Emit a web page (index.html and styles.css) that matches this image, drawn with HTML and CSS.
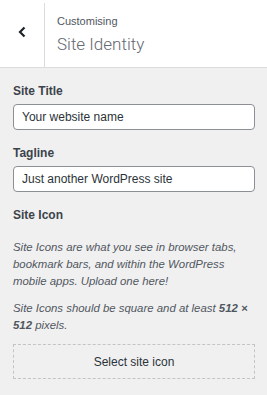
FILE: index.html
```html
<!DOCTYPE html>
<html lang="en">

<head>
    <meta charset="UTF-8">
    <title>Site Identity</title>
    <link rel="stylesheet" href="styles.css">
</head>

<body>
    <div class="panel-header">
        <div class="back">
            <svg width="10" height="12" viewBox="0 0 10 12"><path d="M7.5 1.5 L3 6 L7.5 10.5" fill="none" stroke="#1d2327" stroke-width="2.2"/></svg>
        </div>
        <div class="panel-title">
            <span class="small">Customising</span>
            <span class="big">Site Identity</span>
        </div>
    </div>

    <div class="controls">
        <label class="field-label">Site Title</label>
        <input type="text" value="Your website name">

        <label class="field-label">Tagline</label>
        <input type="text" value="Just another WordPress site">

        <label class="field-label icon-label">Site Icon</label>
        <p class="desc">Site Icons are what you see in browser tabs, bookmark bars, and within the WordPress mobile apps. Upload one here!</p>
        <p class="desc">Site Icons should be square and at least <strong>512 &times;</strong> <strong>512</strong> pixels.</p>

        <button class="select-icon">Select site icon</button>
    </div>
</body>

</html>
```

FILE: styles.css
```css
body {
    margin: 0;
    background: #f0f0f1;
    font-family: "Liberation Sans", Arial, sans-serif;
    color: #50575e;
}

.panel-header {
    display: flex;
    height: 67px;
    background: white;
    border-bottom: 1px solid #dcdcde;
}

.back {
    width: 44px;
    border-right: 1px solid #dcdcde;
    margin-top: 3px;
    padding-bottom: 6px;
    display: flex;
    align-items: center;
    justify-content: center;
}

.panel-title {
    display: flex;
    flex-direction: column;
    padding: 13px 0 0 12px;
}

.panel-title .small {
    font-size: 11px;
    color: #50575e;
    line-height: 16px;
}

.panel-title .big {
    font-family: Roboto, "Liberation Sans", sans-serif;
    font-size: 17px;
    font-weight: 300;
    color: #646970;
    line-height: 26px;
    margin-top: 2px;
}

.controls {
    padding: 15px 12px 16px 13px;
}

.field-label {
    display: block;
    font-size: 12px;
    font-weight: bold;
    color: #3c434a;
    line-height: 16px;
    margin-bottom: 5px;
}

input {
    display: block;
    box-sizing: border-box;
    width: 242px;
    height: 26px;
    margin: 0 0 15px;
    padding: 0 8px;
    border: 1px solid #8c8f94;
    border-radius: 4px;
    font-family: inherit;
    font-size: 12px;
    color: #2c3338;
    background: white;
}

.icon-label {
    margin-bottom: 16px;
}

.desc {
    margin: 0 0 10px;
    font-size: 11.4px;
    font-style: italic;
    line-height: 17px;
}

.desc strong {
    font-weight: bold;
}

.select-icon {
    display: block;
    box-sizing: border-box;
    width: 242px;
    height: 35px;
    margin-top: 0;
    border: 1px dashed #c3c4c7;
    background: #f0f0f1;
    font-family: inherit;
    font-size: 12px;
    color: #2c3338;
}
```
